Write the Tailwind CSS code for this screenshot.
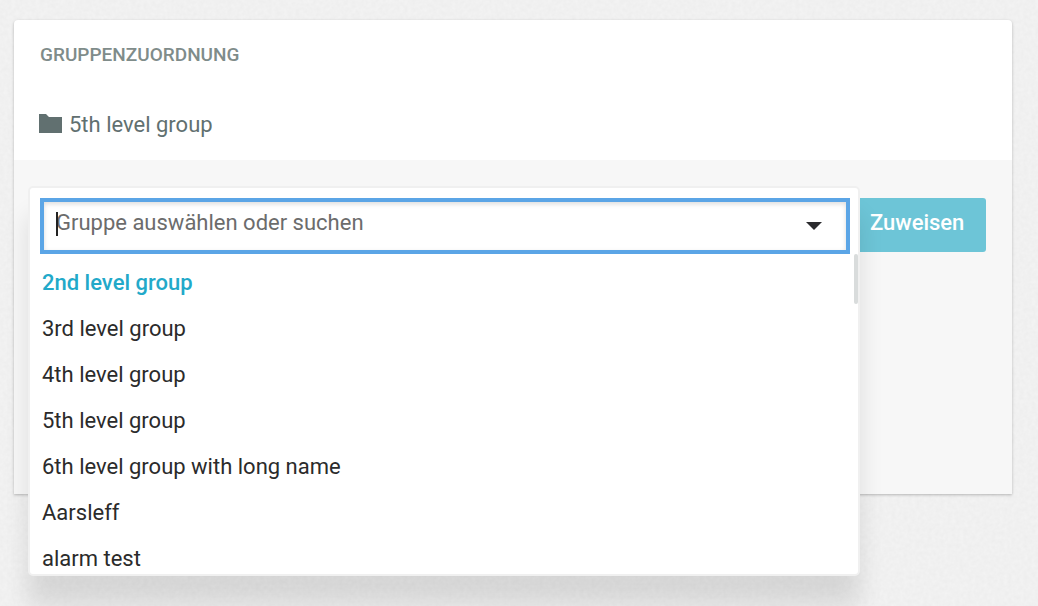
<!DOCTYPE html>
<html lang="de">
<head>
<meta charset="utf-8">
<meta name="viewport" content="width=device-width, initial-scale=1">
<title>Gruppenzuordnung</title>
<script src="https://cdn.jsdelivr.net/npm/@tailwindcss/browser@4"></script>
</head>
<body class="relative min-h-screen overflow-hidden bg-[#f0f0f0] font-[Roboto,'Noto_Sans',sans-serif] text-[22px] leading-7 text-[#2b2b2b]">
  <!-- Paper grain behind the card -->
  <svg class="absolute inset-0 h-full w-full" aria-hidden="true">
    <filter id="grain" x="0" y="0" width="100%" height="100%" color-interpolation-filters="sRGB">
      <feTurbulence type="fractalNoise" baseFrequency="0.25" numOctaves="2" seed="4"/>
      <feColorMatrix values="0.03 0 0 0 0.927  0.03 0 0 0 0.927  0.03 0 0 0 0.927  0 0 0 0 1"/>
    </filter>
    <rect width="100%" height="100%" filter="url(#grain)"/>
  </svg>

  <main class="relative pt-5 pr-[26px] pl-[14px]">
    <section class="rounded-t bg-white shadow-[0_1px_3px_rgba(0,0,0,0.25)]">
      <h1 class="px-[26px] pt-[21px] text-[19px] leading-7 font-medium text-[#7f8c8a]">GRUPPENZUORDNUNG</h1>
      <div class="flex items-center gap-[7px] px-[25px] pt-[42px] pb-[21px] text-[#617070]">
        <svg class="mb-[3px] h-[19px] w-[23px]" viewBox="0 0 23 19" fill="currentColor" aria-hidden="true"><path d="M0 0H7L10 3H23V19H0Z"/></svg>
        <span>5th level group</span>
      </div>
      <div class="relative min-h-[334px] bg-[#f7f7f7] px-[26px] pt-[38px]">
        <div class="flex justify-end">
          <button type="button" class="h-[54px] w-[138px] rounded-[3px] bg-[#6dc5d7] pb-[5px] pl-[22px] text-left font-medium text-white">Zuweisen</button>
        </div>

        <div class="absolute top-[26px] right-[152px] left-[14px] rounded-[5px] border-2 border-[#f0f0f0] bg-white pt-[10px] shadow-[0_30px_24px_0_rgba(0,0,0,0.11)]">
          <div class="relative mr-2 ml-[10px]">
            <input type="text" aria-label="Gruppe auswählen oder suchen" placeholder="Gruppe auswählen oder suchen" class="block h-14 w-full border-4 border-[#5ba5e6] bg-white pr-14 pb-[7px] pl-3 caret-transparent shadow-[inset_0_2px_5px_rgba(0,0,0,0.14)] outline-none placeholder:text-[#6c6c6c]">
            <span class="absolute top-[14px] left-4 h-6 w-0.5 bg-[#222]"></span>
            <svg class="absolute top-6 right-7 h-2 w-4" viewBox="0 0 16 8" fill="#2b2b2e" aria-hidden="true"><path d="M0 0H16L8 8Z"/></svg>
          </div>
          <div class="relative">
            <ul role="listbox" aria-label="Gruppen" class="h-80 overflow-hidden pt-[6px]">
              <li role="option" aria-selected="true" class="px-3 py-[9px] font-medium text-[#22a9c9]">2nd level group</li>
              <li role="option" class="px-3 py-[9px]">3rd level group</li>
              <li role="option" class="px-3 py-[9px]">4th level group</li>
              <li role="option" class="px-3 py-[9px]">5th level group</li>
              <li role="option" class="px-3 py-[9px]">6th level group with long name</li>
              <li role="option" class="px-3 py-[9px]">Aarsleff</li>
              <li role="option" class="px-3 py-[9px]">alarm test</li>
            </ul>
            <div class="absolute top-0 right-0 h-[50px] w-1 rounded-full bg-[#d9dcdc]"></div>
          </div>
        </div>
      </div>
    </section>
  </main>
</body>
</html>
